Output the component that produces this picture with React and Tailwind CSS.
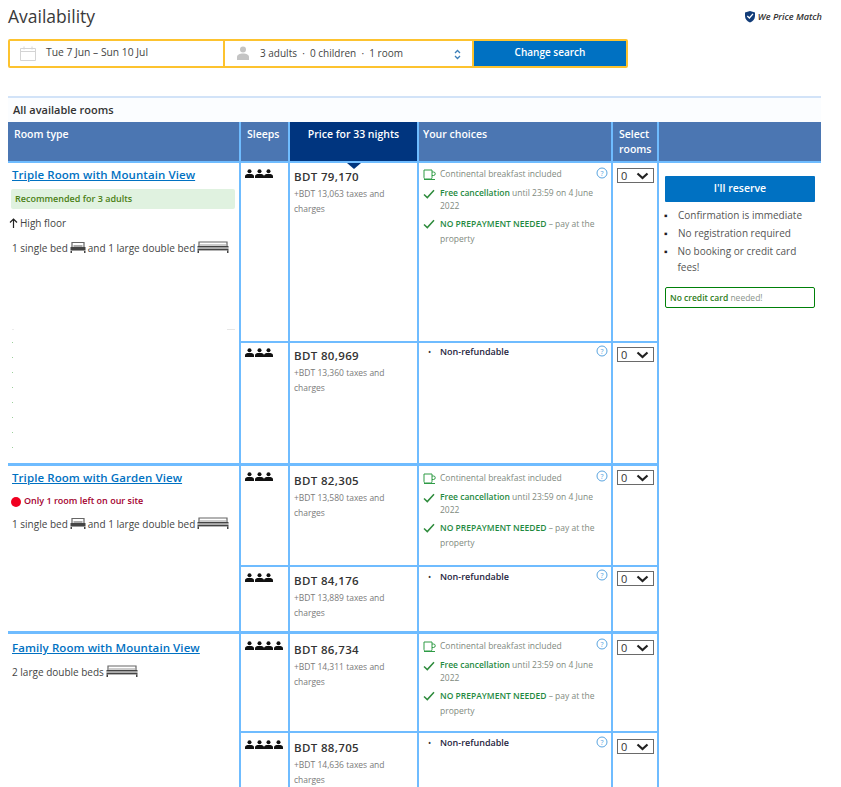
const LINE = "border-[#6fbcff]";

function Person() {
  return (
    <svg width="9" height="9" viewBox="0 0 9 9" className="block">
      <circle cx="4.5" cy="2.3" r="2" fill="#111" />
      <path d="M0 9V7.2C0 5.6 1.6 5 4.5 5S9 5.6 9 7.2V9Z" fill="#111" />
    </svg>
  );
}

function People({ n }) {
  return (
    <div className="flex gap-[0.6px]">
      {Array.from({ length: n }).map((_, i) => (
        <Person key={i} />
      ))}
    </div>
  );
}

function SingleBed() {
  return (
    <svg width="16" height="12" viewBox="0 0 16 12" className="inline-block align-[-1px] mx-[2px]">
      <path d="M2 6V1.500h12V6" fill="none" stroke="#666" strokeWidth="1.200" />
      <rect x="3.500" y="4" width="9" height="2" fill="#aaa" />
      <rect x="0.500" y="6" width="15" height="3" fill="#444" />
      <rect x="0.500" y="9" width="15" height="1" fill="#999" />
      <rect x="0.500" y="10" width="1.500" height="2" fill="#444" />
      <rect x="14" y="10" width="1.500" height="2" fill="#444" />
    </svg>
  );
}

function DoubleBed() {
  return (
    <svg width="32" height="12" viewBox="0 0 32 12" className="inline-block align-[-1px] mx-[2px]">
      <path d="M2 5V1h28v4" fill="none" stroke="#666" strokeWidth="1.200" />
      <rect x="3" y="3" width="26" height="2" fill="#ccc" />
      <rect x="0.500" y="5" width="31" height="1.600" fill="#444" />
      <rect x="0.500" y="6.600" width="31" height="1.200" fill="#bbb" />
      <rect x="0.500" y="7.800" width="31" height="1.600" fill="#444" />
      <rect x="0.500" y="9.400" width="1.500" height="2.600" fill="#444" />
      <rect x="30" y="9.400" width="1.500" height="2.600" fill="#444" />
    </svg>
  );
}

function Title({ children }) {
  return (
    <a className="block text-[11.5px] leading-[16px] font-semibold text-[#0071c2] underline tracking-[0.08px]">
      {children}
    </a>
  );
}

function Check() {
  return (
    <svg width="12" height="10" viewBox="0 0 12 10" className="shrink-0 mt-[3px]">
      <path d="M1 5.500 4.300 8.600 11 1.200" fill="none" stroke="#2e8b3c" strokeWidth="1.500" />
    </svg>
  );
}

function Cup() {
  return (
    <svg width="13" height="11" viewBox="0 0 13 11" className="shrink-0 mt-[2px]">
      <path d="M1 1h8v7.500a1.500 1.500 0 0 1-1.500 1.500h-5A1.500 1.500 0 0 1 1 8.500Z" fill="none" stroke="#2e9b45" strokeWidth="1" />
      <path d="M9 3h1.500a1.500 1.500 0 0 1 0 3.500H9M1 10.500h11" fill="none" stroke="#2e9b45" strokeWidth="1" />
    </svg>
  );
}

function Help({ top }) {
  return (
    <svg width="12" height="12" viewBox="0 0 12 12" className={`absolute right-[3px] ${top}`}>
      <circle cx="6" cy="6" r="5" fill="none" stroke="#5aa5e0" strokeWidth="1" />
      <text x="6" y="8.500" textAnchor="middle" fontSize="7" fill="#5aa5e0" fontFamily="Open Sans, sans-serif">?</text>
    </svg>
  );
}

function Select() {
  return (
    <div className="w-[37px] h-[15px] border border-[#6a6a6a] flex items-center justify-between pl-[3px] pr-[4px] text-[11px] leading-none text-[#333] bg-white">
      <span>0</span>
      <svg width="13" height="8" viewBox="0 0 13 8">
        <path d="M1.500 1.500 6.500 6 11.500 1.500" fill="none" stroke="#222" strokeWidth="2.200" />
      </svg>
    </div>
  );
}

function Cells({ sleeps, price, tax, refundable, end, offset, sleepTop, choiceTop, helpTop, selectTop }) {
  const b = end ? "border-b-[3px]" : "border-b-2";
  return (
    <>
      <div className={`border-r-2 ${b} ${LINE} pl-[4px] ${sleepTop}`}>
        <People n={sleeps} />
      </div>
      <div className={`border-r-2 ${b} ${LINE} pl-[4px] ${offset}`}>
        <div className="text-[11.5px] leading-[16px] font-semibold text-[#333] tracking-[0.35px]">{price}</div>
        <div className="text-[8.5px] leading-[15px] text-[#7a7a7a] mt-[0.5px]">
          +BDT {tax} taxes and
          <br />
          charges
        </div>
      </div>
      <div className={`relative border-r-2 ${b} ${LINE} pl-[4px] pr-[6px] ${choiceTop} text-[8.5px] leading-[14px] text-[#7f8a80]`}>
        <Help top={helpTop} />
        {refundable ? (
          <div className="flex items-start">
            <span className="w-[17px] pl-[5px] text-[#333] leading-[14px]">•</span>
            <span className="text-[9px] font-semibold text-[#262640]">Non-refundable</span>
          </div>
        ) : (
          <>
            <div className="flex gap-[4px]">
              <Cup />
              <span>Continental breakfast included</span>
            </div>
            <div className="flex gap-[5px] mt-[5px]">
              <Check />
              <span className="leading-[13px]">
                <b className="font-semibold text-[#1f8a3f]">Free cancellation</b> until 23:59 on 4 June 2022
              </span>
            </div>
            <div className="flex gap-[5px] mt-[4px]">
              <Check />
              <span className="leading-[15px]">
                <b className="font-semibold text-[#1f8a3f]">NO PREPAYMENT NEEDED</b> – pay at the property
              </span>
            </div>
          </>
        )}
      </div>
      <div className={`border-r-2 ${b} ${LINE} pl-[4px] ${selectTop}`}>
        <Select />
      </div>
    </>
  );
}

function BedLine({ children }) {
  return <div className="text-[10px] leading-[14px] text-[#444]">{children}</div>;
}

function Head({ children, navy, inset }) {
  return (
    <div
      className={`border-r-2 border-b-2 ${LINE} ${inset ? "pl-[6px] pr-[2px]" : "px-[4px]"} pt-[5px] text-[10.5px] leading-[15px] font-semibold text-white ${navy ? "bg-[#00357f] text-center" : "bg-[#4b76b2]"}`}
    >
      {children}
    </div>
  );
}

export default function App() {
  return (
    <div className="h-[787px] overflow-hidden bg-white font-['Open_Sans',sans-serif] pl-[8px] w-[841px]">
      <div className="flex items-center justify-between w-[814px] h-[39px] pb-[6px]">
        <h1 className="text-[17.5px] font-normal text-[#3a3a3a]">Availability</h1>
        <div className="flex items-center gap-[2px] text-[9.1px] italic font-semibold text-[#333]">
          <svg width="12" height="13" viewBox="0 0 12 13">
            <path d="M1 2.500 6 1l5 1.500V6c0 3-2.200 5.500-5 6.500C3.200 11.500 1 9 1 6Z" fill="#123c78" />
            <path d="M3.300 6 5.400 8 9 3.800" fill="none" stroke="#fff" strokeWidth="1.300" />
          </svg>
          We Price Match
        </div>
      </div>

      <div className="flex w-[620px] h-[29px] border-2 border-[#fdc32f] rounded-[2px] text-[10px] text-[#444]">
        <div className="w-[215px] flex items-center gap-[10px] pl-[10px] pb-[1px] border-r-2 border-[#fdc32f]">
          <svg width="16" height="15" viewBox="0 0 16 15">
            <path d="M.5 2.500h15v12H.5ZM.5 5.500h15M4 .500v3M12 .500v3" fill="none" stroke="#d4d4d4" strokeWidth="1" />
          </svg>
          <span className="text-[10.3px]">Tue 7 Jun – Sun 10 Jul</span>
        </div>
        <div className="w-[249px] flex items-center pl-[11px] pr-[11px] pb-[1px] border-r-2 border-[#fdc32f]">
          <svg width="14" height="14" viewBox="0 0 14 14" className="mr-[10px]">
            <circle cx="7" cy="3.500" r="3" fill="#c4c4c4" />
            <path d="M1 14v-3c0-2 2.500-3.500 6-3.500s6 1.500 6 3.500v3Z" fill="#c4c4c4" />
          </svg>
          <span className="whitespace-pre">3 adults  ·  0 children  ·  1 room</span>
          <svg width="7" height="11" viewBox="0 0 7 11" className="ml-auto mt-[2px]">
            <path d="M1 4 3.500 1.500 6 4M1 7l2.500 2.500L6 7" fill="none" stroke="#3c7fb8" strokeWidth="1.300" />
          </svg>
        </div>
        <div className="flex-1 flex items-center justify-center bg-[#0071c2] text-white font-semibold text-[10px] pb-[2px]">
          Change search
        </div>
      </div>

      <div className="w-[813px] mt-[28px] border-t-2 border-[#d2e3f8] h-[26px] bg-[#fbfdff] flex items-center pl-[5px] pt-[1px] text-[11px] font-semibold text-[#333]">
        All available rooms
      </div>

      <div className="relative w-[813px] grid grid-cols-[233px_49px_129px_194px_46px_162px] grid-rows-[41px_180px_123px_101px_67px_99px_100px]">
        <Head inset>Room type</Head>
        <Head inset>Sleeps</Head>
        <Head navy>Price for 33 nights</Head>
        <Head>Your choices</Head>
        <Head inset>Select rooms</Head>
        <div className="bg-[#4b76b2] border-b-2 border-[#6fbcff]" />

        <div className={`row-span-2 border-r-2 border-b-[3px] ${LINE} pt-[4px] pl-[3px] pr-[4px]`}>
          <div className="pl-[1px]">
            <Title>Triple Room with Mountain View</Title>
          </div>
          <div className="mt-[6px] h-[20px] bg-[#e0f2e0] rounded-[2px] pl-[4px] text-[9px] leading-[20px] font-semibold text-[#4a7f14]">
            Recommended for 3 adults
          </div>
          <div className="mt-[6px] -ml-[2px] flex items-center gap-[2px] text-[10px] leading-[16px] text-[#444]">
            <svg width="9" height="10" viewBox="0 0 9 10">
              <path d="M4.500 10V1M1 4.500 4.500 1 8 4.500" fill="none" stroke="#222" strokeWidth="1.200" />
            </svg>
            High floor
          </div>
          <div className="pl-[1px] mt-[10px]">
            <BedLine>
              1 single bed
              <SingleBed />
              and 1 large double bed
              <DoubleBed />
            </BedLine>
          </div>
          <div className="mt-[74px] flex justify-between">
            <span className="w-[2px] h-px bg-[#ececec] ml-[1px]" />
            <span className="w-[8px] h-px bg-[#e6e6e6]" />
          </div>
          <div className="ml-[1px] mt-[12px] flex flex-col gap-[14px]">
            {Array.from({ length: 8 }).map((_, i) => (
              <span key={i} className="w-px h-px bg-[#9ccf9c]" />
            ))}
          </div>
        </div>
        <Cells sleeps={3} price="BDT 79,170" tax="13,063" offset="pt-[6px]" sleepTop="pt-[6px]" choiceTop="pt-[4px]" helpTop="top-[4px]" selectTop="pt-[5px]" />
        <div className="row-span-6 pt-[13px] pl-[6px] pr-[6px]">
          <div className="h-[26px] bg-[#0071c2] text-white text-[10.5px] font-semibold flex items-center justify-center rounded-[1px]">
            I'll reserve
          </div>
          <ul className="mt-[4px] text-[10px] leading-[16px] text-[#555]">
            <li className="flex pt-[1px] pb-[1px]">
              <span className="w-[13px] -ml-[1px] mr-[1px] text-[#222]">▪</span>
              <span>Confirmation is immediate</span>
            </li>
            <li className="flex pt-[1px] pb-[1px]">
              <span className="w-[13px] -ml-[1px] mr-[1px] text-[#222]">▪</span>
              <span>No registration required</span>
            </li>
            <li className="flex pt-[1px]">
              <span className="w-[13px] -ml-[1px] mr-[1px] text-[#222]">▪</span>
              <span>No booking or credit card fees!</span>
            </li>
          </ul>
          <div className="mt-[12px] h-[21px] border border-[#008009] rounded-[2px] pl-[4px] text-[8.5px] leading-[19px] text-[#8a948a]">
            <b className="font-semibold text-[#2e7d20]">No credit card</b> needed!
          </div>
        </div>

        <Cells sleeps={3} price="BDT 80,969" tax="13,360" refundable end offset="pt-[5px]" sleepTop="pt-[5px]" choiceTop="pt-[2px]" helpTop="top-[2px]" selectTop="pt-[4px]" />

        <div className={`row-span-2 border-r-2 border-b-[3px] ${LINE} pt-[4px] pl-[4px]`}>
          <Title>Triple Room with Garden View</Title>
          <div className="mt-[8px] flex items-center gap-[3px] -ml-[1px] text-[9px] leading-[14px] font-semibold text-[#a3002e]">
            <span className="w-[10px] h-[10px] rounded-full bg-[#f00020] mt-[2px]" />
            Only 1 room left on our site
          </div>
          <div className="mt-[9px]">
            <BedLine>
              1 single bed
              <SingleBed />
              and 1 large double bed
              <DoubleBed />
            </BedLine>
          </div>
        </div>
        <Cells sleeps={3} price="BDT 82,305" tax="13,580" offset="pt-[7px]" sleepTop="pt-[6px]" choiceTop="pt-[5px]" helpTop="top-[4px]" selectTop="pt-[4px]" />
        <Cells sleeps={3} price="BDT 84,176" tax="13,889" refundable end offset="pt-[6px]" sleepTop="pt-[6px]" choiceTop="pt-[3px]" helpTop="top-[2px]" selectTop="pt-[4px]" />

        <div className={`row-span-2 border-r-2 ${LINE} pt-[6px] pl-[4px]`}>
          <Title>Family Room with Mountain View</Title>
          <div className="mt-[9px]">
            <BedLine>
              2 large double beds
              <DoubleBed />
            </BedLine>
          </div>
        </div>
        <Cells sleeps={4} price="BDT 86,734" tax="14,311" offset="pt-[8px]" sleepTop="pt-[7px]" choiceTop="pt-[5px]" helpTop="top-[4px]" selectTop="pt-[6px]" />
        <Cells sleeps={4} price="BDT 88,705" tax="14,636" refundable offset="pt-[7px]" sleepTop="pt-[7px]" choiceTop="pt-[3px]" helpTop="top-[3px]" selectTop="pt-[6px]" />

        <div className="absolute left-[339px] top-[41px] w-0 h-0 border-l-[7px] border-r-[7px] border-t-[6px] border-l-transparent border-r-transparent border-t-[#00357f]" />
      </div>
    </div>
  );
}
